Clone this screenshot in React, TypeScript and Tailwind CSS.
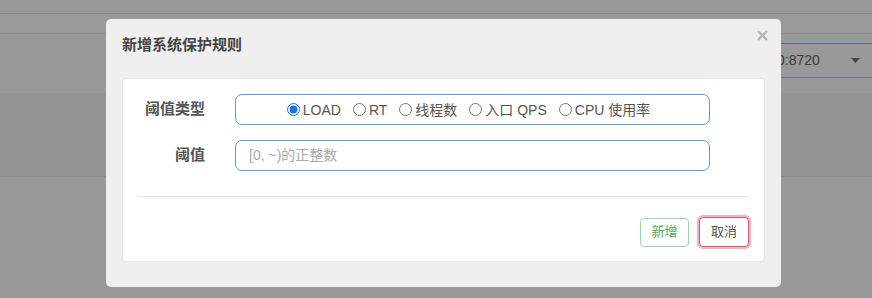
import React from "react";

const font = { fontFamily: '"Liberation Sans", "Noto Sans CJK SC", sans-serif' };

function Radio({ label, checked }: { label: string; checked?: boolean }) {
  return (
    <label className="flex items-center text-[14px] text-[#555] leading-none">
      <input
        type="radio"
        name="grade"
        defaultChecked={checked}
        className="m-0 w-[13px] h-[13px] accent-[#1a73e8]"
      />
      <span className="ml-[3px]">{label}</span>
    </label>
  );
}

export default function App() {
  return (
    <div className="relative w-[872px] h-[298px] overflow-hidden bg-[#999999]" style={font}>
      {/* background page (under backdrop) */}
      <div className="h-[13px]" />
      <div className="h-px bg-[#8b8b8b]" />
      <div className="h-[19px] bg-[#9a9a9a]" />
      <div className="h-px bg-[#8e8e8e]" />
      <div className="h-[59px] flex justify-end pt-[9px]">
        <div className="w-[110px] h-[35px] border-t border-b border-t-[#55708c] border-b-[#6b7c8e] flex items-center justify-between pl-[15px] pr-[12px] text-[14px] text-[#3a3a3a]">
          <span>0:8720</span>
          <svg width="9" height="5" viewBox="0 0 9 5">
            <path d="M0 0 L9 0 L4.5 5 Z" fill="#444" />
          </svg>
        </div>
      </div>
      <div className="h-[83px] bg-[#959595]" />
      <div className="h-px bg-[#8b8b8b]" />

      {/* modal */}
      <div className="absolute left-[106px] top-[19px] w-[675px] h-[268px] bg-[#efefef] rounded-[5px] px-4">
        <div className="h-[59px] pt-[15px] relative">
          <div className="text-[15px] leading-[22px] font-bold text-[#444]">新增系统保护规则</div>
          <svg
            className="absolute right-[-3px] top-[11px]"
            width="11"
            height="11"
            viewBox="0 0 11 11"
          >
            <path d="M1 1 L10 10 M10 1 L1 10" stroke="#b5b5b5" strokeWidth="2.4" />
          </svg>
        </div>
        <div className="h-[184px] bg-white rounded-[4px] border border-[#e4e4e4] px-[15px] pt-[15px]">
          <div className="flex items-center h-[31px]">
            <div className="w-[67px] text-right text-[15px] font-bold text-[#555]">阈值类型</div>
            <div className="ml-[30px] w-[475px] h-[31px] border border-[#5a9bd5] rounded-[7px] flex items-center justify-center gap-[12px] pr-[8px]">
              <Radio label="LOAD" checked />
              <Radio label="RT" />
              <Radio label="线程数" />
              <Radio label="入口 QPS" />
              <Radio label="CPU 使用率" />
            </div>
          </div>
          <div className="flex items-center h-[31px] mt-[15px]">
            <div className="w-[67px] text-right text-[15px] font-bold text-[#555]">阈值</div>
            <div className="ml-[30px] w-[475px] h-[31px] border border-[#5a9bd5] rounded-[7px] flex items-center pl-[13px] text-[14px] text-[#aaa]">
              [0, ~)的正整数
            </div>
          </div>
          <div className="mt-[25px] h-px bg-[#e5e5e5]" />
          <div className="mt-[20px] flex justify-end items-center gap-[10px]">
            <button className="w-[49px] h-[29px] border border-[#9bd6a8] rounded-[4px] text-[13px] text-[#3fae5a] bg-white">
              新增
            </button>
            <button className="w-[50px] h-[30px] border border-[#dc5a6e] rounded-[4px] text-[13px] text-[#555] bg-white shadow-[0_0_0_2px_rgba(232,120,138,0.55)]">
              取消
            </button>
          </div>
        </div>
      </div>
    </div>
  );
}
